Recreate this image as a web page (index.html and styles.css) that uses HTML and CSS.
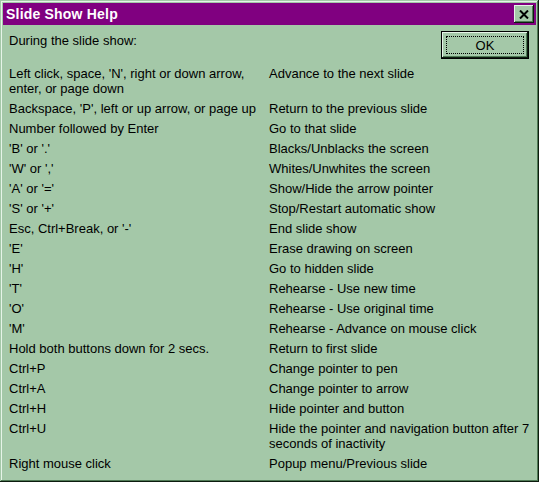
FILE: index.html
```html
<!DOCTYPE html>
<html lang="en">
<head>
    <meta charset="UTF-8">
    <meta name="viewport" content="width=device-width, initial-scale=1.0">
    <title>Slide Show Help</title>
    <link rel="stylesheet" href="styles.css">
</head>
<body>
    <div class="window">
        <div class="titlebar">
            <span class="title">Slide Show Help</span>
            <button class="close" aria-label="Close">
                <svg width="10" height="9" viewBox="0 0 10 9">
                    <path d="M1 0.5 L9 8.5 M9 0.5 L1 8.5" stroke="#000" stroke-width="2" fill="none"/>
                </svg>
            </button>
        </div>

        <div class="content">
            <div class="top">
                <p class="intro">During the slide show:</p>
                <button class="ok"><span class="focus">OK</span></button>
            </div>

            <div class="keys">
                <div>Left click, space, 'N', right or down arrow, enter, or page down</div>
                <div>Advance to the next slide</div>
                <div>Backspace, 'P', left or up arrow, or page up</div>
                <div>Return to the previous slide</div>
                <div>Number followed by Enter</div>
                <div>Go to that slide</div>
                <div>'B' or '.'</div>
                <div>Blacks/Unblacks the screen</div>
                <div>'W' or ','</div>
                <div>Whites/Unwhites the screen</div>
                <div>'A' or '='</div>
                <div>Show/Hide the arrow pointer</div>
                <div>'S' or '+'</div>
                <div>Stop/Restart automatic show</div>
                <div>Esc, Ctrl+Break, or '-'</div>
                <div>End slide show</div>
                <div>'E'</div>
                <div>Erase drawing on screen</div>
                <div>'H'</div>
                <div>Go to hidden slide</div>
                <div>'T'</div>
                <div>Rehearse - Use new time</div>
                <div>'O'</div>
                <div>Rehearse - Use original time</div>
                <div>'M'</div>
                <div>Rehearse - Advance on mouse click</div>
                <div>Hold both buttons down for 2 secs.</div>
                <div>Return to first slide</div>
                <div>Ctrl+P</div>
                <div>Change pointer to pen</div>
                <div>Ctrl+A</div>
                <div>Change pointer to arrow</div>
                <div>Ctrl+H</div>
                <div>Hide pointer and button</div>
                <div>Ctrl+U</div>
                <div>Hide the pointer and navigation button after 7 seconds of inactivity</div>
                <div>Right mouse click</div>
                <div>Popup menu/Previous slide</div>
            </div>
        </div>
    </div>
</body>
</html>
```

FILE: styles.css
```css
html, body {
    margin: 0;
    padding: 0;
    background: #a4c8a8;
}

body {
    font-family: "Liberation Sans", Arial, sans-serif;
    font-size: 13px;
    color: #000;
}

.window {
    box-sizing: border-box;
    width: 539px;
    height: 482px;
    padding: 3px;
    background: #a4c8a8;
    box-shadow: inset -1px -1px #0c1c0e, inset 1px 1px #a4c8a8,
                inset -2px -2px #4f7a55, inset 2px 2px #e6f4e8;
}

.titlebar {
    display: flex;
    align-items: center;
    justify-content: space-between;
    height: 22px;
    background: #800080;
    padding: 0 2px 0 3px;
}

.title {
    color: #fff;
    font-weight: bold;
    font-size: 14px;
    letter-spacing: 0.2px;
    line-height: 22px;
}

.close {
    display: flex;
    align-items: center;
    justify-content: center;
    width: 20px;
    height: 18px;
    padding: 0;
    border: none;
    background: #a4c8a8;
    box-shadow: inset -1px -1px #0c1c0e, inset 1px 1px #e6f4e8,
                inset -2px -2px #4f7a55;
}

.content {
    padding: 0 0 0 6px;
}

.top {
    display: flex;
    justify-content: space-between;
    align-items: flex-start;
    padding-top: 6px;
}

.intro {
    margin: 2px 0 0 0;
    line-height: 15px;
}

.ok {
    box-sizing: border-box;
    width: 88px;
    height: 28px;
    margin-right: 7px;
    padding: 4px;
    font-family: inherit;
    font-size: 13px;
    color: #000;
    background: #a4c8a8;
    border: 1px solid #000;
    box-shadow: inset -1px -1px #0c1c0e, inset 1px 1px #e6f4e8,
                inset -2px -2px #4f7a55;
}

.focus {
    display: flex;
    align-items: center;
    justify-content: center;
    height: 100%;
    border: 1px dotted #000;
    box-sizing: border-box;
}

.keys {
    display: grid;
    grid-template-columns: 260px 1fr;
    row-gap: 5px;
    margin-top: 7px;
    line-height: 15px;
}

.keys div:nth-child(odd) {
    padding-right: 8px;
}
```
